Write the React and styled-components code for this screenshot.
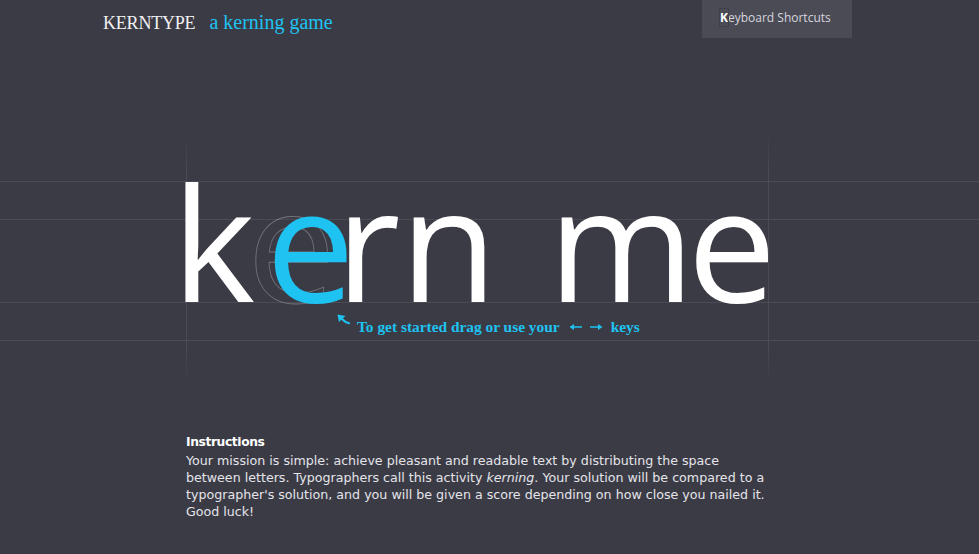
import React from "react";
import styled, { createGlobalStyle } from "styled-components";

const GlobalStyle = createGlobalStyle`
  html, body {
    margin: 0;
    padding: 0;
    background: #3b3b45;
  }
  body {
    font-family: "Open Sans", "DejaVu Sans", sans-serif;
    overflow: hidden;
  }
`;

const GUIDE = "#4b4b56";
const ACCENT = "#1ec3f2";

/* ---------- HEADER ---------- */
const Header = styled.header`
  display: flex;
  align-items: flex-start;
  height: 38px;
  padding: 0 127px 0 103px;
`;

const Brand = styled.div`
  display: flex;
  align-items: baseline;
  gap: 14px;
  padding-top: 10px;
  font-family: "Liberation Serif", "Times New Roman", serif;
  line-height: 24px;
`;

const BrandName = styled.span`
  font-size: 18px;
  color: #f0f0f2;
  letter-spacing: -0.2px;
`;

const Tagline = styled.span`
  font-size: 20px;
  color: ${ACCENT};
`;

const ShortcutsButton = styled.button`
  margin-left: auto;
  width: 150px;
  height: 38px;
  border: none;
  background: #4b4b56;
  color: #d6d6de;
  font-family: "Open Sans", sans-serif;
  font-size: 12px;
  line-height: 36px;
  text-align: left;
  cursor: pointer;
  padding: 0 0 2px 18px;
  white-space: nowrap;
`;

const Kbd = styled.span`
  color: #fff;
  font-weight: 700;
  outline: 1px solid #40404a;
`;

/* ---------- STAGE ---------- */
const line = (y) => `linear-gradient(${GUIDE}, ${GUIDE}) 0 ${y}px / 100% 1px no-repeat`;

const Stage = styled.section`
  margin-top: 97px;
  height: 248px;
  background: ${[46, 84, 167, 205].map(line).join(", ")};
`;

const Frame = styled.div`
  margin-left: 186px;
  width: 581px;
  height: 100%;
  border-style: solid;
  border-width: 0 1px;
  border-image: linear-gradient(
      rgba(75, 75, 86, 0),
      ${GUIDE} 15%,
      ${GUIDE} 85%,
      rgba(75, 75, 86, 0)
    )
    1;
`;

const Word = styled.div`
  display: flex;
  align-items: baseline;
  padding-top: 27px;
  margin-left: -15px;
  font-family: "Open Sans", sans-serif;
  font-size: 158px;
  line-height: 158px;
  color: #fff;
  white-space: pre;
`;

const Letter = styled.span`
  margin-left: ${({ $kern }) => $kern || 0}px;
`;

/* the letter being kerned: its outline stays at the original spot */
const ActiveLetter = styled.span`
  position: relative;
  margin-left: ${({ $kern }) => $kern || 0}px;

  &::before {
    content: "${({ $glyph }) => $glyph}";
    position: absolute;
    left: 0;
    top: 0;
    color: transparent;
    -webkit-text-stroke: 0.8px rgba(255, 255, 255, 0.28);
  }
`;

const Dragged = styled.span`
  position: relative;
  display: inline-block;
  color: ${ACCENT};
  transform: translateX(${({ $offset }) => $offset}px);
`;

const Hint = styled.div`
  display: flex;
  align-items: center;
  margin: -9px 0 0 150px;
  font-family: "Liberation Serif", "Times New Roman", serif;
  font-weight: 700;
  font-size: 15.4px;
  color: ${ACCENT};
  line-height: 20px;
  white-space: nowrap;
`;

const HintText = styled.span`
  margin: 6px 0 0 ${({ $gap }) => $gap ?? 6}px;
`;

const KeysIcon = styled.svg`
  margin: 6px 8px 0 9px;
`;

/* ---------- INSTRUCTIONS ---------- */
const Instructions = styled.section`
  margin: 51px 0 0 186px;
  width: 584px;
  font-family: "DejaVu Sans", Verdana, sans-serif;
  font-size: 12.65px;
  line-height: 17px;
  color: #e4e4ea;
`;

const Heading = styled.h2`
  margin: 0;
  font-size: 12.3px;
  font-weight: 700;
  color: #fff;
  line-height: 17px;
  letter-spacing: -0.4px;
`;

const Body = styled.p`
  margin: 1px 0 0;
`;

function CurvedArrow() {
  return (
    <svg width="14" height="14" viewBox="0 0 14 14" style={{ marginTop: -6 }}>
      <path
        d="M0.5 0.5 L8.5 2 L5.8 4.3 Q8.6 7.6 13.2 8.8 L12.6 10.6 Q7.4 9.4 4.2 5.8 L2 8.2 Z"
        fill={ACCENT}
      />
    </svg>
  );
}

function SideArrows() {
  return (
    <KeysIcon width="34" height="10" viewBox="0 0 34 10">
      <path d="M2 5 H13" stroke={ACCENT} strokeWidth="1.5" />
      <path d="M0.5 5 L5 2 L5 8 Z" fill={ACCENT} />
      <path d="M21 5 H32" stroke={ACCENT} strokeWidth="1.5" />
      <path d="M33.5 5 L29 2 L29 8 Z" fill={ACCENT} />
    </KeysIcon>
  );
}

export default function App() {
  return (
    <>
      <GlobalStyle />
      <Header>
        <Brand>
          <BrandName>KERNTYPE</BrandName>
          <Tagline>a kerning game</Tagline>
        </Brand>
        <ShortcutsButton>
          <Kbd>K</Kbd>eyboard Shortcuts
        </ShortcutsButton>
      </Header>

      <Stage>
        <Frame>
          <Word>
            <Letter>k</Letter>
            <ActiveLetter $kern={-8} $glyph="e">
              <Dragged $offset={19}>e</Dragged>
            </ActiveLetter>
            <Letter>r</Letter>
            <Letter>n</Letter>
            <Letter $kern={10}> </Letter>
            <Letter>m</Letter>
            <Letter $kern={-7}>e</Letter>
          </Word>
          <Hint>
            <CurvedArrow />
            <HintText>To get started drag or use your</HintText>
            <SideArrows />
            <HintText $gap={0}>keys</HintText>
          </Hint>
        </Frame>
      </Stage>

      <Instructions>
        <Heading>Instructions</Heading>
        <Body>
          Your mission is simple: achieve pleasant and readable text by distributing the space
          between letters. Typographers call this activity <em>kerning</em>. Your solution will be
          compared to a typographer's solution, and you will be given a score depending on how
          close you nailed it. Good luck!
        </Body>
      </Instructions>
    </>
  );
}
